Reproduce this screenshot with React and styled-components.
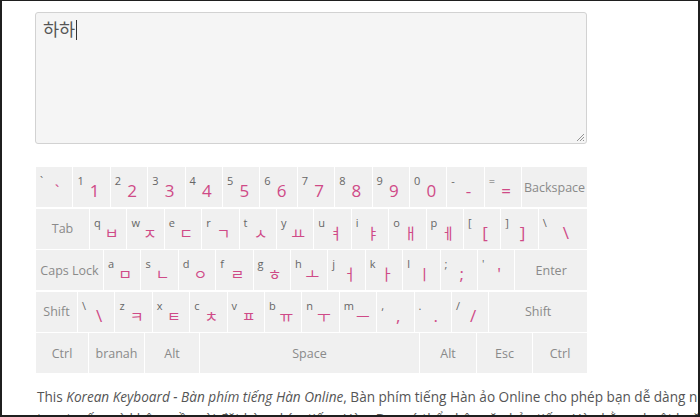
import React from 'react'
import styled, { createGlobalStyle } from 'styled-components';

const GlobalStyle = createGlobalStyle`
    html, body {
        margin: 0;
        padding: 0;
        background: #fff;
    }
`;

const Frame = styled.div`
    width: 700px;
    height: 417px;
    box-sizing: border-box;
    border: 2px solid #1f1f1f;
    border-top-width: 1px;
    overflow: hidden;
    background: #fff;
    font-family: "Open Sans", "Noto Sans", sans-serif;
`;

const Content = styled.div`
    width: 820px;
    padding: 11px 0 0 33px;
`;

const TextBox = styled.div`
    position: relative;
    width: 552px;
    height: 132px;
    box-sizing: border-box;
    background: #f5f5f5;
    border: 1px solid #d2d2d2;
    border-radius: 3px;
    padding: 5px 7px;
    font-family: "Noto Sans CJK KR", "Noto Sans", sans-serif;
    font-size: 17.5px;
    line-height: 22px;
    color: #555;
`;

const Caret = styled.span`
    display: inline-block;
    width: 1px;
    height: 20px;
    background: #333;
    vertical-align: -4px;
    margin-left: 1px;
`;

const Grip = styled.svg`
    position: absolute;
    right: 1px;
    bottom: 1px;
`;

const Keyboard = styled.div`
    width: 551px;
    margin: 23px 0 0 1px;
    display: flex;
    flex-direction: column;
    gap: 1.5px;
`;

const Row = styled.div`
    display: flex;
    gap: 1px;
    height: 40px;
`;

const Key = styled.div`
    flex: ${({w}) => w ? `0 0 ${w}px` : '1 1 0'};
    background: #f0f0f0;
    display: flex;
    align-items: ${({named}) => named ? 'center' : 'stretch'};
    justify-content: center;
    box-sizing: border-box;
    padding: 0 4px 0 4px;
    overflow: hidden;
`;

const Name = styled.span`
    font-size: 12.5px;
    color: #8a8a8a;
    white-space: nowrap;
`;

const Sup = styled.span`
    font-size: 11px;
    line-height: 12px;
    color: #666;
    margin-top: 8px;
    min-width: 6px;
`;

const Main = styled.span`
    flex: 1;
    text-align: center;
    padding-top: 14px;
    font-size: ${({hangul}) => hangul ? '15px' : '17px'};
    line-height: 20px;
    color: #cf4a87;
    font-family: ${({hangul}) => hangul ? '"Noto Sans CJK KR", sans-serif' : '"Open Sans", sans-serif'};
`;

const Text = styled.p`
    margin: 13px 0 0 2px;
    font-size: 13.6px;
    line-height: 22px;
    color: #555;
`;

const UNIT = 36.4;

const rows = [
    [
        ...[['`','`'],['1','1'],['2','2'],['3','3'],['4','4'],['5','5'],['6','6'],['7','7'],['8','8'],['9','9'],['0','0'],['-','-'],['=','=']].map(k => ({sup: k[0], main: k[1], w: UNIT})),
        {name: 'Backspace'},
    ],
    [
        {name: 'Tab', w: 53},
        ...[['q','ㅂ'],['w','ㅈ'],['e','ㄷ'],['r','ㄱ'],['t','ㅅ'],['y','ㅛ'],['u','ㅕ'],['i','ㅑ'],['o','ㅐ'],['p','ㅔ'],['[','['],[']',']']].map(k => ({sup: k[0], main: k[1], w: UNIT})),
        {sup: '\\', main: '\\'},
    ],
    [
        {name: 'Caps Lock', w: 67},
        ...[['a','ㅁ'],['s','ㄴ'],['d','ㅇ'],['f','ㄹ'],['g','ㅎ'],['h','ㅗ'],['j','ㅓ'],['k','ㅏ'],['l','ㅣ'],[';',';'],["'","'"]].map(k => ({sup: k[0], main: k[1], w: UNIT})),
        {name: 'Enter'},
    ],
    [
        {name: 'Shift', w: 41},
        ...[['\\','\\'],['z','ㅋ'],['x','ㅌ'],['c','ㅊ'],['v','ㅍ'],['b','ㅠ'],['n','ㅜ'],['m','ㅡ'],[',',','],['.','.'],['/','/']].map(k => ({sup: k[0], main: k[1], w: UNIT})),
        {name: 'Shift'},
    ],
    [
        {name: 'Ctrl', w: 52},
        {name: 'branah', w: 55},
        {name: 'Alt', w: 54},
        {name: 'Space'},
        {name: 'Alt', w: 56},
        {name: 'Esc', w: 55},
        {name: 'Ctrl', w: 54},
    ],
];

const isHangul = s => /[\u3130-\u318F]/.test(s);

export default () => {
    return(
        <>
            <GlobalStyle />
            <Frame>
                <Content>
                    <TextBox>
                        하하<Caret />
                        <Grip width="10" height="10" viewBox="0 0 10 10">
                            <path d="M9 2 L2 9 M9 5 L5 9 M9 8 L8 9" stroke="#888" strokeWidth="0.9" fill="none" />
                        </Grip>
                    </TextBox>

                    <Keyboard>
                        {rows.map((row, i) => (
                            <Row key={i}>
                                {row.map((k, j) => k.name ? (
                                    <Key key={j} w={k.w} named>
                                        <Name>{k.name}</Name>
                                    </Key>
                                ) : (
                                    <Key key={j} w={k.w}>
                                        <Sup>{k.sup}</Sup>
                                        <Main hangul={isHangul(k.main)}>{k.main}</Main>
                                    </Key>
                                ))}
                            </Row>
                        ))}
                    </Keyboard>

                    <Text>
                        This <em>Korean Keyboard - Bàn phím tiếng Hàn Online</em>, Bàn phím tiếng Hàn ảo Online cho phép bạn dễ dàng nhập các ký tự
                        tiếng Hàn trực tuyến mà không cần cài đặt bàn phím tiếng Hàn. Bạn có thể nhập văn bản tiếng Hàn bằng chuột hoặc bàn phím máy tính.
                    </Text>
                </Content>
            </Frame>
        </>
    );
}
